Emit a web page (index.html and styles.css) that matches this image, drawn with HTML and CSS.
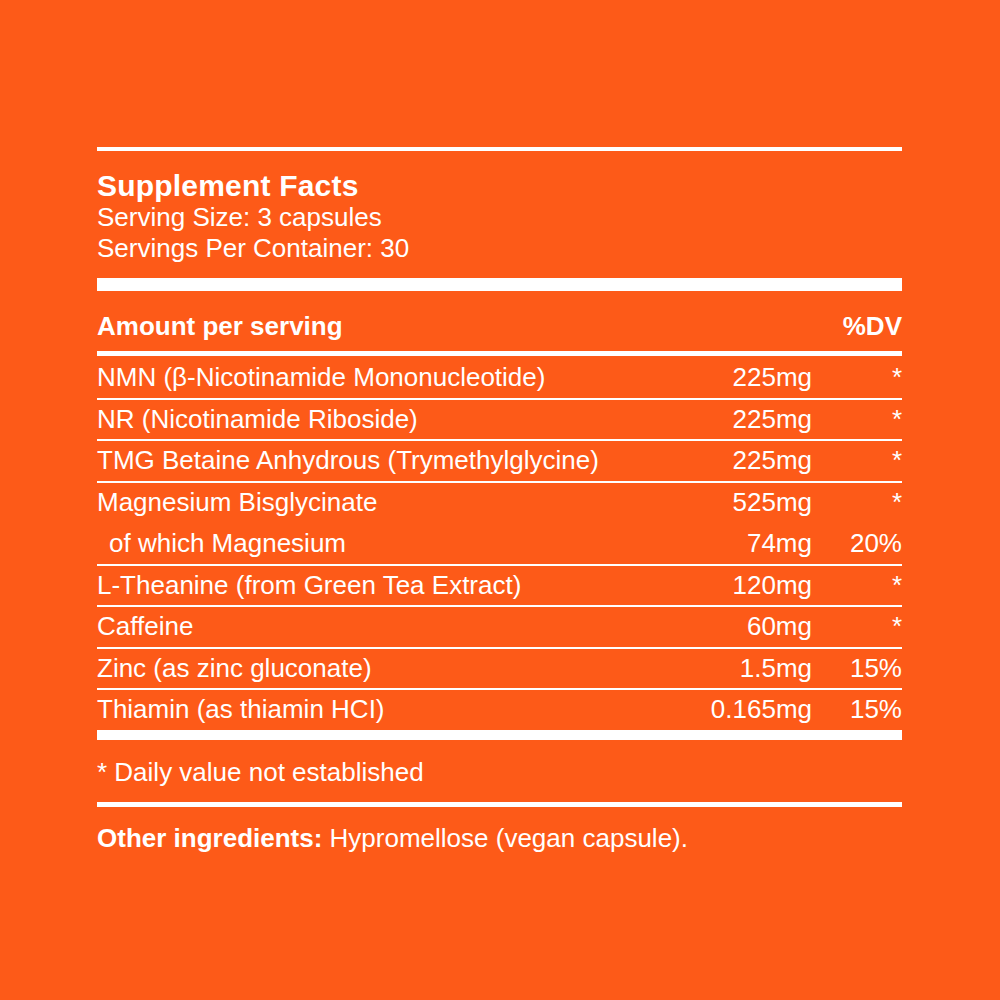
FILE: index.html
```html
<!DOCTYPE html>
<html lang="en">
<head>
<meta charset="utf-8">
<title>Supplement Facts</title>
<link rel="stylesheet" href="styles.css">
</head>
<body>
<main class="label">
  <div class="rule rule-top"></div>
  <header class="head">
    <h1 class="title">Supplement Facts</h1>
    <p class="meta">Serving Size: 3 capsules</p>
    <p class="meta">Servings Per Container: 30</p>
  </header>
  <div class="rule rule-thick"></div>
  <div class="colhead">
    <span>Amount per serving</span>
    <span class="dv">%DV</span>
  </div>
  <div class="rule rule-mid"></div>
  <div class="rows">
    <div class="row first"><span>NMN (β-Nicotinamide Mononucleotide)</span><span class="amt">225mg</span><span class="dv">*</span></div>
    <div class="row"><span>NR (Nicotinamide Riboside)</span><span class="amt">225mg</span><span class="dv">*</span></div>
    <div class="row"><span>TMG Betaine Anhydrous (Trymethylglycine)</span><span class="amt">225mg</span><span class="dv">*</span></div>
    <div class="row"><span>Magnesium Bisglycinate</span><span class="amt">525mg</span><span class="dv">*</span></div>
    <div class="row sub"><span class="indent">of which Magnesium</span><span class="amt">74mg</span><span class="dv">20%</span></div>
    <div class="row"><span>L-Theanine (from Green Tea Extract)</span><span class="amt">120mg</span><span class="dv">*</span></div>
    <div class="row"><span>Caffeine</span><span class="amt">60mg</span><span class="dv">*</span></div>
    <div class="row"><span>Zinc (as zinc gluconate)</span><span class="amt">1.5mg</span><span class="dv">15%</span></div>
    <div class="row"><span>Thiamin (as thiamin HCI)</span><span class="amt">0.165mg</span><span class="dv">15%</span></div>
  </div>
  <div class="rule rule-bottom"></div>
  <p class="note">* Daily value not established</p>
  <div class="rule rule-mid"></div>
  <p class="other"><strong>Other ingredients:</strong> Hypromellose (vegan capsule).</p>
</main>
</body>
</html>
```

FILE: styles.css
```css
html, body {
  margin: 0;
  padding: 0;
}
body {
  background: #fd5a18;
  color: #ffffff;
  font-family: "Liberation Sans", Arial, Helvetica, sans-serif;
  font-size: 26px;
  width: 1000px;
  height: 1000px;
  overflow: hidden;
}
.label {
  width: 805px;
  margin: 147px 0 0 97px;
  display: flex;
  flex-direction: column;
}
.rule {
  background: #ffffff;
}
.rule-top { height: 4px; }
.rule-thick { height: 13px; margin-top: 14px; }
.rule-mid { height: 5px; }
.rule-bottom { height: 10px; }

.head {
  margin-top: 18px;
}
.title {
  margin: 0;
  font-size: 30px;
  font-weight: 700;
  line-height: 33px;
  letter-spacing: 0.2px;
}
.meta {
  margin: 0;
  line-height: 31px;
}
.colhead {
  display: flex;
  justify-content: space-between;
  font-weight: 700;
  line-height: 31px;
  margin-top: 20px;
  margin-bottom: 9px;
}
.rows {
  display: flex;
  flex-direction: column;
}
.row {
  display: grid;
  grid-template-columns: 1fr 140px 90px;
  line-height: 39.5px;
  border-top: 2px solid #ffffff;
}
.row.first,
.row.sub {
  border-top-color: transparent;
}
.row span:first-child {
  position: relative;
}
.amt, .dv {
  text-align: right;
}
.indent {
  padding-left: 12px;
}
.note {
  margin: 17px 0 14px;
  line-height: 31px;
}
.other {
  margin: 16px 0 0;
  line-height: 31px;
}
.other strong {
  font-weight: 700;
}
```
